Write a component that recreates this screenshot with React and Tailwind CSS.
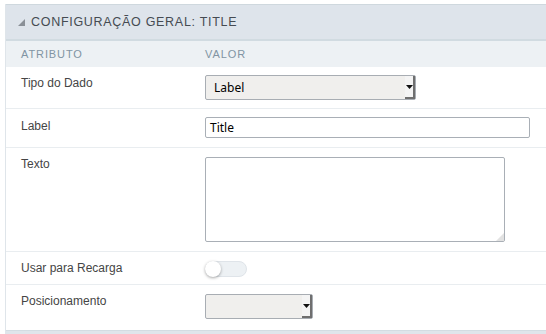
export default function App() {
  const label = "pl-[15px] w-[199px] shrink-0 text-[12px] leading-[16px] text-[#454545]";
  return (
    <div className="w-[546px] h-[334px] bg-white pt-[4px] overflow-hidden" style={{ fontFamily: '"Liberation Sans", Arial, sans-serif' }}>
      <div className="ml-[5px] border-l border-[#dfe5ea] h-[330px] flex flex-col">
        <div className="h-[37px] shrink-0 bg-[#dee4eb] border-t border-[#cfd8de] border-b-2 border-b-[#d1dbe1] flex items-center pl-[12px] gap-[6px]">
          <svg width="7" height="7" viewBox="0 0 7 7">
            <polygon points="7,0 7,7 0,7" fill="#8a9097" />
          </svg>
          <span className="text-[12.5px] tracking-[0.7px] text-[#454b52]">CONFIGURAÇÃO GERAL: TITLE</span>
        </div>
        <div className="h-[26px] shrink-0 bg-[#edf1f4] flex items-center text-[11px] tracking-[0.9px] text-[#8194a3]">
          <span className="pl-[15px] w-[199px]">ATRIBUTO</span>
          <span>VALOR</span>
        </div>

        <div className="h-[42px] shrink-0 flex border-b border-[#e9edf0]">
          <div className={`${label} pt-[8px]`}>Tipo do Dado</div>
          <div className="pt-[8px]">
            <Select width="w-[211px]" text="Label" />
          </div>
        </div>

        <div className="h-[39px] shrink-0 flex border-b border-[#e9edf0]">
          <div className={`${label} pt-[9px]`}>Label</div>
          <div className="pt-[8px]">
            <div className="w-[325px] h-[21px] border border-[#a9afb6] rounded-[2px] bg-white flex items-center pl-[4px] text-[12px] text-black" style={{ fontFamily: '"Noto Sans", sans-serif' }}>
              Title
            </div>
          </div>
        </div>

        <div className="h-[104px] shrink-0 flex border-b border-[#e9edf0]">
          <div className={`${label} pt-[8px]`}>Texto</div>
          <div className="pt-[9px]">
            <div className="relative w-[300px] h-[85px] border border-[#a9afb6] rounded-[2px] bg-white">
              <svg className="absolute right-0 bottom-0" width="8" height="8" viewBox="0 0 8 8">
                <polygon points="8,0 8,8 0,8" fill="#e2e2e2" />
              </svg>
            </div>
          </div>
        </div>

        <div className="h-[33px] shrink-0 flex border-b border-[#e9edf0]">
          <div className={`${label} pt-[8px]`}>Usar para Recarga</div>
          <div className="pt-[9px]">
            <div className="relative w-[42px] h-[16px] rounded-full bg-[#edf1f4] border border-[#dfe4e9]">
              <div className="absolute left-[-1px] top-[-1px] w-[16px] h-[16px] rounded-full bg-white shadow-[0_1px_3px_rgba(0,0,0,0.35)]" />
            </div>
          </div>
        </div>

        <div className="h-[45px] shrink-0 flex">
          <div className={`${label} pt-[8px]`}>Posicionamento</div>
          <div className="pt-[9px]">
            <Select width="w-[108px]" text="" />
          </div>
        </div>

        <div className="flex-1 bg-[#dfe5eb] border-t border-[#d3dce2]" />
      </div>
    </div>
  );
}

function Select({ width, text }) {
  return (
    <div className={`${width} h-[25px] border border-[#a8adb3] rounded-[2px] bg-[#f0efed] flex items-stretch`}>
      <div className="flex-1 flex items-center pl-[8px] text-[12px] text-black" style={{ fontFamily: '"Noto Sans", sans-serif' }}>
        {text}
      </div>
      <div className="w-[10px] bg-[#f4f4f4] border-r-2 border-b-2 border-[#6f6f6f] flex items-center justify-center">
        <svg width="7" height="4" viewBox="0 0 7 4">
          <polygon points="0,0 7,0 3.5,4" fill="#111" />
        </svg>
      </div>
    </div>
  );
}
